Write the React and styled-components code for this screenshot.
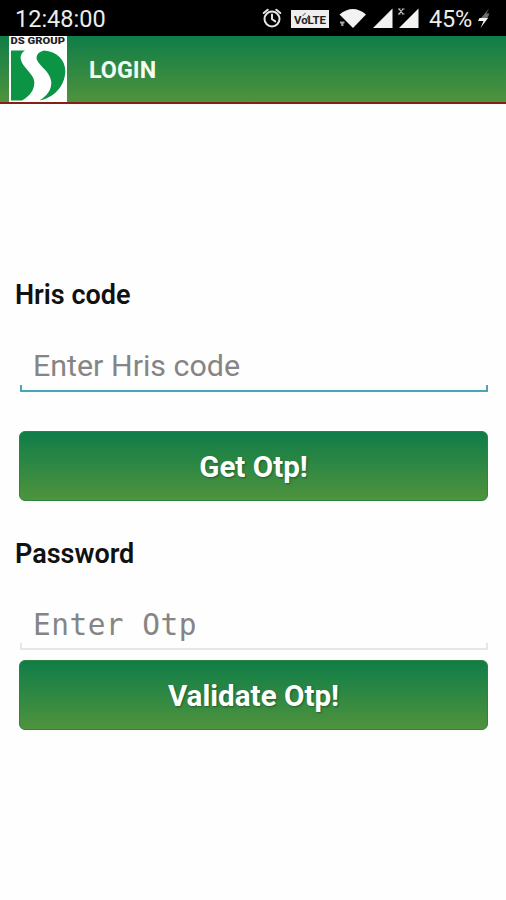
import {useState} from "react";
import styled, {createGlobalStyle, css} from "styled-components";


const GlobalStyle = createGlobalStyle`
  * {
    box-sizing: border-box;
  }

  body {
    margin: 0;
    background: #ffffff;
    font-family: Roboto, "Liberation Sans", sans-serif;
  }
`;

const greenGradientCss = css`
  background: linear-gradient(#0f7d48, #4f933d);
`;

const Screen = styled.div`
  width: 506px;
  height: 900px;
  display: flex;
  flex-direction: column;
  overflow: hidden;
  background: #fefefe;
`;

const StatusBar = styled.div`
  height: 36px;
  flex: none;
  display: flex;
  justify-content: space-between;
  padding: 2px 14px 0 15px;
  background: #000000;
  color: #ececec;
  font-size: 23.5px;
  line-height: 35px;
`;
const StatusIcons = styled.svg`
  width: 164px;
  height: 34px;
  margin-top: -2px;
`;
const StatusGroup = styled.div`
  display: flex;
`;
const Battery = styled.span`
  width: 47px;
  margin-left: 4px;
  letter-spacing: -0.2px;
`;
const BoltIcon = styled.svg`
  width: 15px;
  height: 34px;
  margin: -2px 0 0 1px;
`;

const TitleBar = styled.header`
  ${greenGradientCss}
  height: 68px;
  flex: none;
  display: flex;
  align-items: center;
  padding-left: 9px;
  border-bottom: 2px solid #852018;
`;
const Logo = styled.svg`
  width: 58px;
  height: 66px;
  margin-right: 22px;
`;
const Title = styled.h1`
  margin: 1px 0 0;
  color: #f4faf4;
  font-size: 23.3px;
  font-weight: 700;
  line-height: 30px;
`;

const Form = styled.form`
  display: flex;
  flex-direction: column;
  padding: 175px 18px 0 19px;
`;
const Label = styled.label`
  margin-left: -4px;
  color: #111111;
  font-size: 27px;
  font-weight: 600;
  line-height: 32px;

  button + & {
    margin-top: 37px;
  }
`;
const Field = styled.div`
  margin: ${({$password}) => $password ? "30px 0 9px 1px" : "31px 0 38px 1px"};
  display: flex;
  flex-direction: column;
`;
const Input = styled.input`
  width: 100%;
  height: 44px;
  padding: ${({$mono}) => $mono ? "5px" : "2px"} 13px 0;
  border: none;
  outline: none;
  background: transparent;
  color: #222222;
  font-family: ${({$mono}) => $mono ? '"DejaVu Sans Mono", monospace' : 'Roboto, sans-serif'};
  font-size: ${({$mono}) => $mono ? "29.5px" : "30.4px"};
  letter-spacing: ${({$mono}) => $mono ? "0.45px" : "0"};

  &::placeholder {
    color: #858585;
    opacity: 1;
  }
`;
// Holo-style underline: a thin bar with short upturned ends
const Underline = styled.div`
  height: 7px;
  margin-top: -1px;
  margin-bottom: 1px;
  border: 2px solid ${({$color}) => $color};
  border-top: none;
`;
const Button = styled.button`
  ${greenGradientCss}
  height: 70px;
  padding: 2px 0 0;
  border: 1px solid #2c843f;
  border-radius: 6px;
  color: #ffffff;
  font-family: Roboto, sans-serif;
  font-size: 29.6px;
  font-weight: 700;
  text-shadow: 1px 1px 2px rgba(0, 50, 20, 0.5);
`;


function StatusSymbols() {
    return (
        <StatusIcons viewBox="261 0 164 34">
            {/* alarm */}
            <g fill="none" stroke="#e4e4e4" strokeWidth="2" strokeLinecap="round">
                <circle cx="272" cy="19" r="7.5"/>
                <path d="M272 14.5V19l3.2 2.4M263.7 13l4-3.3M280.3 13l-4-3.3"/>
            </g>

            {/* volte */}
            <rect x="291" y="10" width="38" height="18" fill="#eeeeee"/>
            <text x="294" y="23.5" fontSize="11.5" fontWeight="700" textLength="32"
                  lengthAdjust="spacingAndGlyphs" fill="#222222">VoLTE</text>
            <path d="M302.5 16l3-3M306 21l3-6" stroke="#444444" strokeWidth="1"/>

            {/* wifi */}
            <path d="M339.5 14.5Q353 3.5 366 14.5L353 28Z" fill="#f2f2f2"/>
            <path d="M340 22.500h4.500M342.300 22v4" stroke="#a5a5a5" strokeWidth="2.2"/>

            {/* signal */}
            <path d="M373 28L392.5 8.5V28Z" fill="#f2f2f2"/>
            <path d="M399 28L418.5 8.5V28Z" fill="#f2f2f2"/>
            <path d="M398 9h2.500M402 9h2.500M398 14h2.500M402 14h2.500M399 9l4 5M403 9l-4 5"
                  stroke="#c8c8c8" strokeWidth="1.2"/>
        </StatusIcons>
    );
}

function DsLogo() {
    return (
        <Logo viewBox="9 36 58 66">
            <rect x="9" y="36" width="58" height="66" fill="#ffffff"/>
            <text x="10.5" y="44" fontSize="9.5" fontWeight="900" textLength="54.5"
                  lengthAdjust="spacingAndGlyphs" fill="#222222">DS GROUP</text>
            <g fill="#0b9444">
                <path d="M11 50.500H25C21 53 20 57 21 60C23 68 34 74 34.300 82C34.500 90 30 96 22 100.500H11Z"/>
                <path d="M44 50.500C38 52 35.500 56 37 60C40 67 50 71 51.300 82C51.500 90 47 96 39.500 100.500C53 98 65 87 65.300 71C65.300 60 57 51.500 44 50.500Z"/>
            </g>
        </Logo>
    );
}

export default function App() {
    const [hrisCode, setHrisCode] = useState("");
    const [otp, setOtp] = useState("");

    return (<>
        <GlobalStyle/>
        <Screen>
            <StatusBar>
                <span>12:48:00</span>
                <StatusGroup>
                    <StatusSymbols/>
                    <Battery>45%</Battery>
                    <BoltIcon viewBox="0 0 15 34">
                        <path d="M12 8.500L4 18H10.500L12.500 13.500H9.500Z" fill="#6c6c6c"/>
                        <path d="M2.500 18H11L3.500 28L6.500 21H1Z" fill="#f4f4f4"/>
                    </BoltIcon>
                </StatusGroup>
            </StatusBar>

            <TitleBar>
                <DsLogo/>
                <Title>LOGIN</Title>
            </TitleBar>

            <Form onSubmit={e => e.preventDefault()}>
                <Label htmlFor="hris">Hris code</Label>
                <Field>
                    <Input id="hris" placeholder="Enter Hris code"
                           value={hrisCode} onChange={e => setHrisCode(e.target.value)}/>
                    <Underline $color="#4aa5b9"/>
                </Field>
                <Button type="button">Get Otp!</Button>

                <Label htmlFor="otp">Password</Label>
                <Field $password>
                    <Input id="otp" type="password" placeholder="Enter Otp" $mono
                           value={otp} onChange={e => setOtp(e.target.value)}/>
                    <Underline $color="#e6e6e6"/>
                </Field>
                <Button type="submit">Validate Otp!</Button>
            </Form>
        </Screen>
    </>);
}
